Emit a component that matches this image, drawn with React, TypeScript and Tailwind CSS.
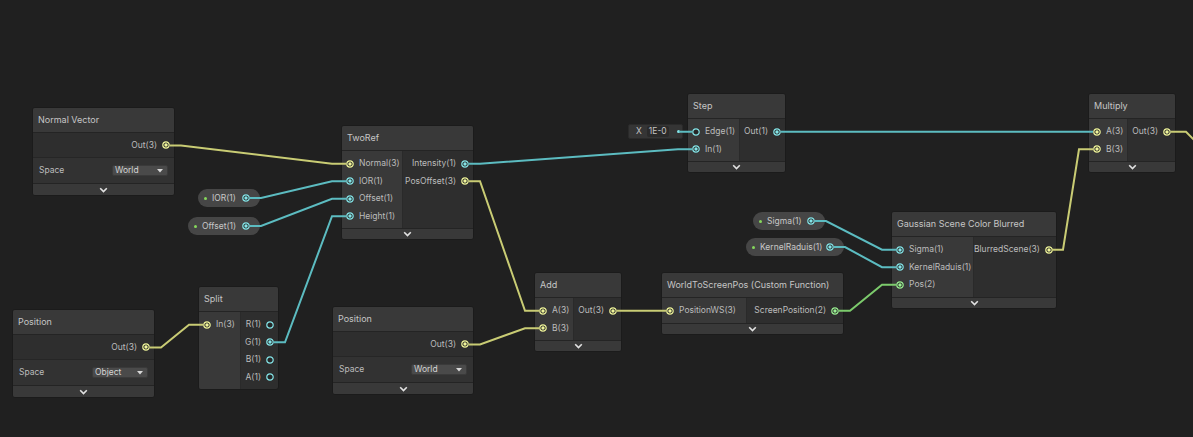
import React from "react";

type T = "v1" | "v2" | "v3";

const PORT: Record<T, string> = { v1: "#84e4e7", v2: "#9aef92", v3: "#f0f59a" };
const WIRE: Record<T, string> = { v1: "#5cbcc1", v2: "#7ccb6c", v3: "#c9cc74" };

function Port({ t, on = true }: { t: T; on?: boolean }) {
    return (
        <svg width="8" height="8" viewBox="0 0 8 8" className="shrink-0">
            <circle cx="4" cy="4" r="3.2" fill="#262626" stroke={PORT[t]} strokeWidth="1.2" />
            {on && <circle cx="4" cy="4" r="1.7" fill={PORT[t]} />}
        </svg>
    );
}

function Chevron() {
    return (
        <svg width="9" height="6" viewBox="0 0 9 6">
            <path d="M1.2 1.2 4.5 4.5 7.8 1.2" fill="none" stroke="#e2e2e2" strokeWidth="1.6" />
        </svg>
    );
}

function Collapse({ h = "h-[11px]" }: { h?: string }) {
    return <div className={`${h} bg-[#393939] border-t border-[#242424] flex items-center justify-center`}><Chevron /></div>;
}

function Header({ title }: { title: string }) {
    return (
        <div className="h-[25px] bg-[#393939] border-b border-[#242424] px-[5px] flex items-center text-[9px] text-[#c6c6c6] whitespace-nowrap">
            {title}
        </div>
    );
}

type P = { label: string; t: T; on?: boolean };

function Node({ pos, inW, title, ins, outs, collapse = true }: { pos: string; inW: string; title: string; ins: P[]; outs: P[]; collapse?: boolean }) {
    return (
        <div className={`absolute ${pos} flex flex-col rounded-[3px] border border-[#1b1b1b] bg-[#2e2e2e] overflow-hidden`}>
            <Header title={title} />
            <div className="flex">
                <div className={`${inW} shrink-0 bg-[#393939] border-r border-[#2a2a2a] pt-[4px] pb-[3px]`}>
                    {ins.map((p) => (
                        <div key={p.label} className="h-[17.5px] flex items-center gap-[5px] pl-[4px] whitespace-nowrap">
                            <Port t={p.t} on={p.on} />
                            <span>{p.label}</span>
                        </div>
                    ))}
                </div>
                <div className="flex-1 pt-[4px] pb-[3px]">
                    {outs.map((p) => (
                        <div key={p.label} className="h-[17.5px] flex items-center justify-end gap-[5px] pr-[4px] whitespace-nowrap">
                            <span>{p.label}</span>
                            <Port t={p.t} on={p.on} />
                        </div>
                    ))}
                </div>
            </div>
            {collapse && <Collapse />}
        </div>
    );
}

function PropNode({ pos, title, space }: { pos: string; title: string; space: string }) {
    return (
        <div className={`absolute ${pos} flex flex-col rounded-[3px] border border-[#1b1b1b] bg-[#2e2e2e] overflow-hidden`}>
            <Header title={title} />
            <div className="h-[25px] flex items-center justify-end gap-[5px] pr-[4px] border-b border-[#262626]">
                <span>Out(3)</span>
                <Port t="v3" />
            </div>
            <div className="h-[25px] bg-[#323232] flex items-center justify-between pl-[6px] pr-[6px]">
                <span>Space</span>
                <div className="w-[56px] h-[11px] bg-[#4a4a4a] border border-[#3a3a3a] rounded-[2px] flex items-center justify-between pl-[2px] pr-[4px] text-[#d4d4d4]">
                    <span className="leading-none">{space}</span>
                    <svg width="6" height="4" viewBox="0 0 6 4"><path d="M0 0H6L3 3.5Z" fill="#d8d8d8" /></svg>
                </div>
            </div>
            <Collapse h="h-[12px]" />
        </div>
    );
}

function Pill({ pos, label }: { pos: string; label: string }) {
    return (
        <div className={`absolute ${pos} h-[18px] rounded-full bg-[#464646] flex items-center pl-[6px] pr-[10px] text-[#c8c8c8]`}>
            <div className="w-[3px] h-[3px] rounded-full bg-[#86d85c]" />
            <span className="ml-[5px] whitespace-nowrap">{label}</span>
            <div className="ml-auto"><Port t="v1" /></div>
        </div>
    );
}

const wire = (x1: number, y1: number, x2: number, y2: number) =>
    `M${x1 + 4} ${y1} H${x1 + 15} L${x2 - 18} ${y2} H${x2 - 4}`;

const wires: [T, number, number, number, number][] = [
    ["v3", 166, 145.5, 350, 163.75],
    ["v1", 246, 198, 350, 181.25],
    ["v1", 246, 226, 350, 198.75],
    ["v1", 270, 342.25, 350, 216.25],
    ["v3", 146, 347.5, 207, 324.75],
    ["v1", 465, 163.75, 696, 149.25],
    ["v3", 465, 181.25, 543, 310.75],
    ["v3", 465, 344.5, 543, 328.25],
    ["v3", 613, 310.75, 670, 310.75],
    ["v2", 835, 310.75, 900, 284.75],
    ["v1", 811, 221, 900, 249.75],
    ["v1", 830, 247, 900, 267.25],
    ["v3", 1048, 249.75, 1097, 149.25],
    ["v1", 777, 131.75, 1097, 131.75],
];

export default function App() {
    return (
        <div className="relative w-[1193px] h-[437px] overflow-hidden bg-[#202020] font-[Inter,sans-serif] text-[8.5px] text-[#bcbcbc]">
            <PropNode pos="left-[32px] top-[107px] w-[143px]" title="Normal Vector" space="World" />
            <PropNode pos="left-[12px] top-[309px] w-[143px]" title="Position" space="Object" />
            <PropNode pos="left-[332px] top-[306px] w-[142px]" title="Position" space="World" />

            <Node
                pos="left-[341px] top-[125px] w-[133px]"
                inW="w-[61px]"
                title="TwoRef"
                ins={[
                    { label: "Normal(3)", t: "v3" },
                    { label: "IOR(1)", t: "v1" },
                    { label: "Offset(1)", t: "v1" },
                    { label: "Height(1)", t: "v1" },
                ]}
                outs={[
                    { label: "Intensity(1)", t: "v1" },
                    { label: "PosOffset(3)", t: "v3" },
                ]}
            />
            <Node
                pos="left-[198px] top-[286px] w-[81px]"
                inW="w-[42px]"
                title="Split"
                collapse={false}
                ins={[{ label: "In(3)", t: "v3" }]}
                outs={[
                    { label: "R(1)", t: "v1", on: false },
                    { label: "G(1)", t: "v1" },
                    { label: "B(1)", t: "v1", on: false },
                    { label: "A(1)", t: "v1", on: false },
                ]}
            />
            <Node
                pos="left-[687px] top-[93px] w-[99px]"
                inW="w-[52px]"
                title="Step"
                ins={[
                    { label: "Edge(1)", t: "v1", on: false },
                    { label: "In(1)", t: "v1" },
                ]}
                outs={[{ label: "Out(1)", t: "v1" }]}
            />
            <Node
                pos="left-[1088px] top-[93px] w-[88px]"
                inW="w-[39px]"
                title="Multiply"
                ins={[
                    { label: "A(3)", t: "v3" },
                    { label: "B(3)", t: "v3" },
                ]}
                outs={[{ label: "Out(3)", t: "v3" }]}
            />
            <Node
                pos="left-[534px] top-[272px] w-[88px]"
                inW="w-[39px]"
                title="Add"
                ins={[
                    { label: "A(3)", t: "v3" },
                    { label: "B(3)", t: "v3" },
                ]}
                outs={[{ label: "Out(3)", t: "v3" }]}
            />
            <Node
                pos="left-[661px] top-[272px] w-[183px]"
                inW="w-[85px]"
                title="WorldToScreenPos (Custom Function)"
                ins={[{ label: "PositionWS(3)", t: "v3" }]}
                outs={[{ label: "ScreenPosition(2)", t: "v2" }]}
            />
            <Node
                pos="left-[891px] top-[211px] w-[166px]"
                inW="w-[82px]"
                title="Gaussian Scene Color Blurred"
                ins={[
                    { label: "Sigma(1)", t: "v1" },
                    { label: "KernelRaduis(1)", t: "v1" },
                    { label: "Pos(2)", t: "v2" },
                ]}
                outs={[{ label: "BlurredScene(3)", t: "v3" }]}
            />

            <Pill pos="left-[198px] top-[189px] w-[62px]" label="IOR(1)" />
            <Pill pos="left-[188px] top-[217px] w-[72px]" label="Offset(1)" />
            <Pill pos="left-[753px] top-[212px] w-[72px]" label="Sigma(1)" />
            <Pill pos="left-[746px] top-[238px] w-[98px]" label="KernelRaduis(1)" />

            {/* inline value on Step.Edge */}
            <div className="absolute left-[628px] top-[124px] w-[55px] h-[15px] bg-[#353535] border border-[#2a2a2a] rounded-[2px] flex items-center pl-[7px] text-[#c4c4c4]">
                <span>X</span>
                <div className="ml-[5px] w-[22px] h-[11px] bg-[#2a2a2a] rounded-[2px] flex items-center pl-[2px] whitespace-nowrap">1E-0</div>
                <div className="ml-[8px] w-[3px] h-[3px] rounded-full bg-[#84e4e7]" />
            </div>

            <svg className="absolute inset-0 pointer-events-none" width="1193" height="437">
                {wires.map(([t, x1, y1, x2, y2], i) => (
                    <path key={i} d={wire(x1, y1, x2, y2)} fill="none" stroke={WIRE[t]} strokeWidth="2" />
                ))}
                <path d="M1171 131.75 H1186 L1200 146" fill="none" stroke={WIRE.v3} strokeWidth="2" />
                <path d="M679 131.75 H692" fill="none" stroke={WIRE.v1} strokeWidth="2" />
            </svg>
        </div>
    );
}
